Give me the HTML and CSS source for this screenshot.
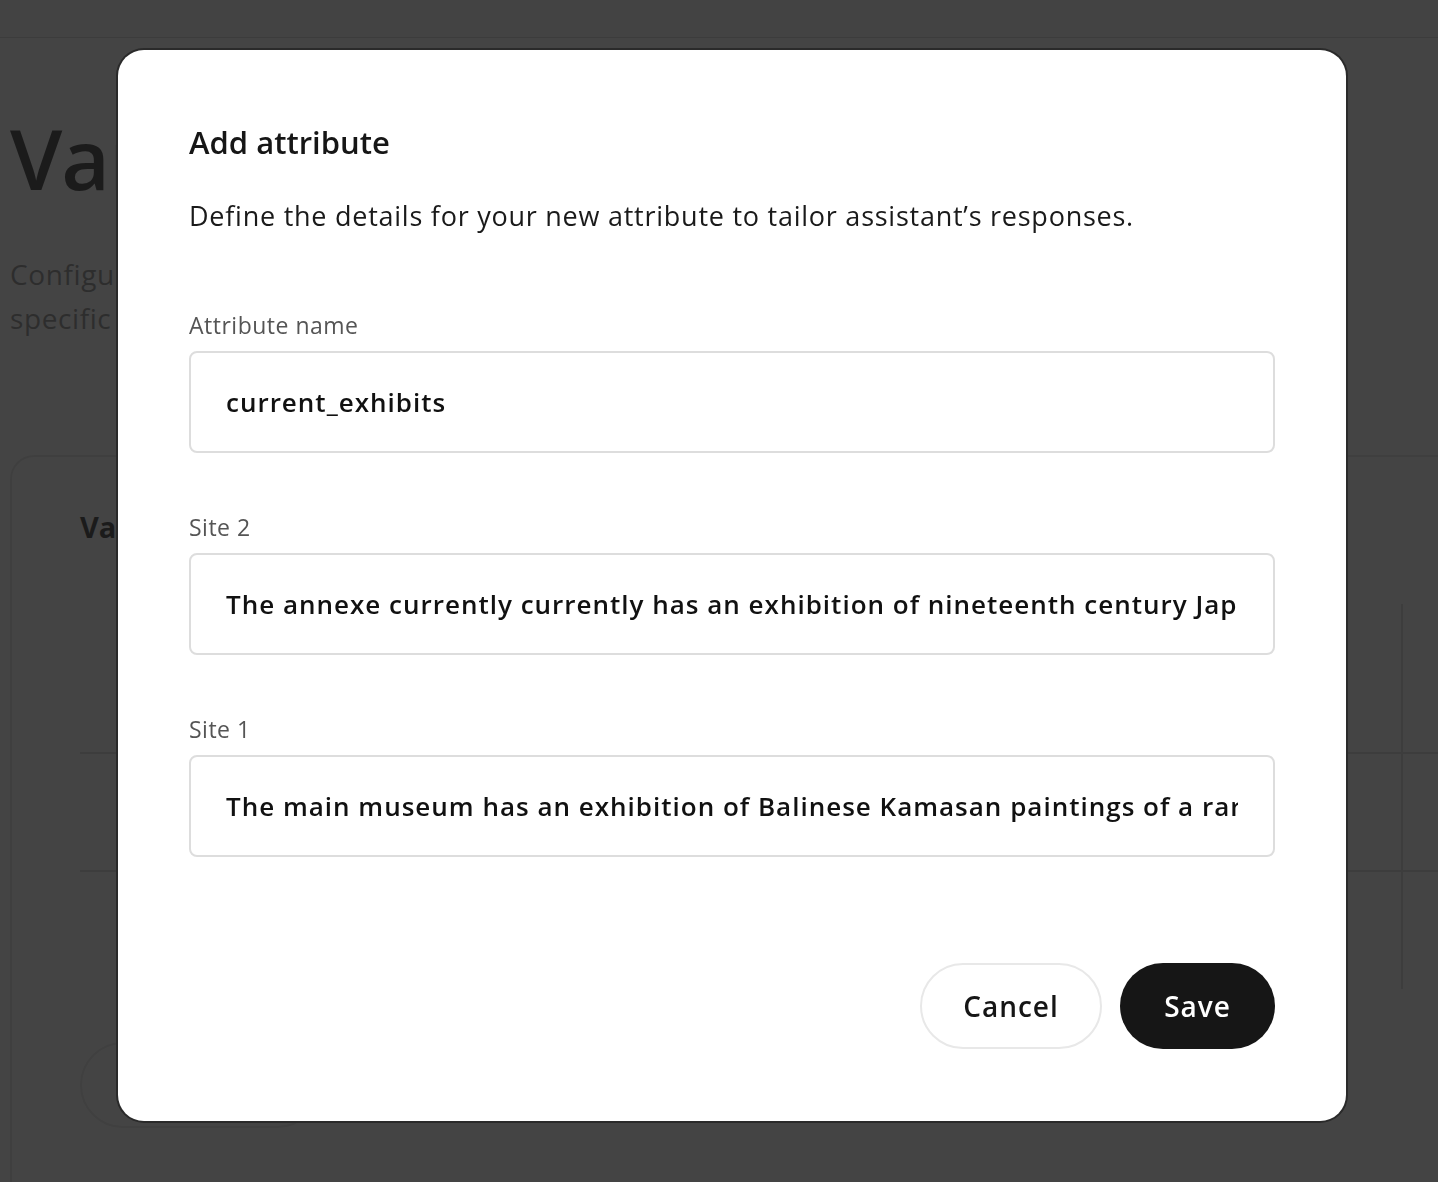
FILE: index.html
```html
<!DOCTYPE html>
<html lang="en">
<head>
<meta charset="utf-8">
<title>Add attribute</title>
<link rel="stylesheet" href="styles.css">
</head>
<body>
<div class="page">
  <header class="topbar"></header>
  <main class="main">
    <h1 class="page-title">Variables</h1>
    <p class="page-sub">Configure variables to customize the assistant’s answers for<br>specific sites and locations.</p>
    <section class="card">
      <h2 class="card-title">Variables</h2>
      <div class="table">
        <div class="row row-head"><div class="cell"></div><div class="cell cell-end"></div></div>
        <div class="row"><div class="cell"></div><div class="cell cell-end"></div></div>
        <div class="row row-last"><div class="cell"></div><div class="cell cell-end"></div></div>
      </div>
      <div class="card-actions"><span class="ghost-btn" aria-hidden="true"></span></div>
    </section>
  </main>
</div>

<div class="overlay">
  <div class="modal" role="dialog" aria-labelledby="modal-title">
    <h3 class="modal-title" id="modal-title">Add attribute</h3>
    <p class="modal-desc">Define the details for your new attribute to tailor assistant’s responses.</p>
    <div class="fields">
      <label class="field">
        <span class="field-label">Attribute name</span>
        <input class="field-input" type="text" readonly value="current_exhibits">
      </label>
      <label class="field">
        <span class="field-label">Site 2</span>
        <input class="field-input" type="text" readonly value="The annexe currently currently has an exhibition of nineteenth century Japanese woodblock prints.">
      </label>
      <label class="field">
        <span class="field-label">Site 1</span>
        <input class="field-input" type="text" readonly value="The main museum has an exhibition of Balinese Kamasan paintings of a rare and delicate style.">
      </label>
    </div>
    <div class="modal-actions">
      <button class="btn btn-secondary" type="button">Cancel</button>
      <button class="btn btn-primary" type="button">Save</button>
    </div>
  </div>
</div>
</body>
</html>
```

FILE: styles.css
```css
* { box-sizing: border-box; }

html, body {
  margin: 0;
  padding: 0;
  width: 1438px;
  height: 1182px;
  overflow: hidden;
  background: #ffffff;
  font-family: "Open Sans", "Liberation Sans", sans-serif;
  color: #111111;
}

/* ---------- background page ---------- */
.page {
  width: 1438px;
  height: 1182px;
}

.topbar {
  height: 38px;
  background: #f6f6f6;
  border-bottom: 1px solid #cfcfcf;
}

.main {
  padding: 0 0 0 10px;
}

.page-title {
  margin: 70px 0 0 0;
  font-size: 84px;
  line-height: 100px;
  font-weight: 600;
  color: #111111;
  letter-spacing: -1px;
}

.page-sub {
  margin: 44px 0 0 0;
  font-size: 28px;
  line-height: 44px;
  color: #7a7a7a;
  letter-spacing: 0.6px;
}

.card {
  margin-top: 115px;
  border: 2px solid #e2e2e2;
  border-right: none;
  border-radius: 24px 0 0 24px;
  padding: 50px 0 40px 68px;
  height: 760px;
}

.card-title {
  margin: 0;
  font-size: 29px;
  line-height: 40px;
  font-weight: 700;
  color: #111111;
}

.table {
  margin-top: 57px;
  display: flex;
  flex-direction: column;
}

.row {
  display: grid;
  grid-template-columns: 1321px 1fr;
  height: 118px;
  border-bottom: 2px solid #d2d2d2;
}

.row-head { height: 150px; }
.row-last { border-bottom: none; height: 117px; }

.cell-end {
  border-left: 2px solid #d2d2d2;
}

.card-actions {
  margin-top: 53px;
}

.ghost-btn {
  display: inline-block;
  width: 240px;
  height: 86px;
  border: 2px solid #e4e4e4;
  border-radius: 43px;
}

/* ---------- overlay + modal ---------- */
.overlay {
  position: fixed;
  inset: 0;
  background: rgba(30, 30, 30, 0.83);
  padding: 50px 0 0 118px;
}

.modal {
  width: 1228px;
  height: 1071px;
  background: #ffffff;
  border-radius: 26px;
  box-shadow: 0 0 0 2px #2a2a2a;
  padding: 72px 71px 72px 71px;
  display: flex;
  flex-direction: column;
}

.modal-title {
  margin: 0;
  font-size: 31px;
  line-height: 40px;
  font-weight: 600;
  color: #161616;
  letter-spacing: 0;
}

.modal-desc {
  margin: 34px 0 0 0;
  font-size: 27px;
  line-height: 40px;
  font-weight: 400;
  color: #1a1a1a;
  letter-spacing: 0.75px;
}

.fields {
  margin-top: 74px;
  display: flex;
  flex-direction: column;
  gap: 59px;
}

.field {
  display: flex;
  flex-direction: column;
  gap: 11px;
}

.field-label {
  font-size: 23px;
  line-height: 30px;
  color: #555555;
  letter-spacing: 0.5px;
}

.field-input {
  width: 1086px;
  height: 102px;
  border: 2px solid #dddddd;
  border-radius: 8px;
  padding: 0 35px;
  font-family: "Open Sans", "Liberation Sans", sans-serif;
  font-size: 26px;
  font-weight: 600;
  letter-spacing: 1px;
  color: #111111;
  background: #ffffff;
  outline: none;
}

.modal-actions {
  margin-top: auto;
  display: flex;
  justify-content: flex-end;
  gap: 18px;
}

.btn {
  height: 86px;
  border-radius: 43px;
  font-family: "Open Sans", "Liberation Sans", sans-serif;
  font-size: 28px;
  font-weight: 600;
  letter-spacing: 1px;
  cursor: pointer;
}

.btn-secondary {
  width: 182px;
  background: #ffffff;
  border: 2px solid #e8e8e8;
  color: #161616;
}

.btn-primary {
  width: 155px;
  background: #161616;
  border: none;
  color: #ffffff;
}
```
